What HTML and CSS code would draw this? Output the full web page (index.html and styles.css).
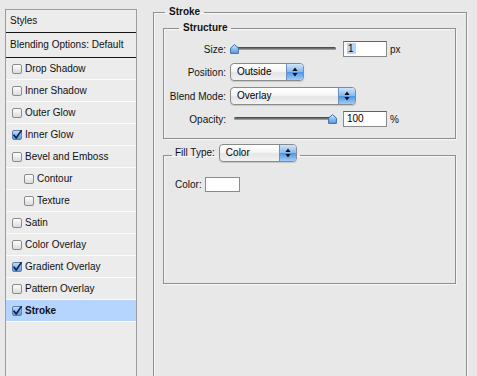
FILE: index.html
```html
<!DOCTYPE html>
<html>
<head>
<meta charset="utf-8">
<link rel="stylesheet" href="styles.css">
</head>
<body>
<div class="window">
  <aside class="styles-list">
    <div class="list-head">Styles</div>
    <div class="list-blend">Blending Options: Default</div>
    <ul class="effects">
      <li class="effect"><svg class="cb" viewBox="0 0 10 10"><use href="#box"/></svg>Drop Shadow</li>
      <li class="effect"><svg class="cb" viewBox="0 0 10 10"><use href="#box"/></svg>Inner Shadow</li>
      <li class="effect"><svg class="cb" viewBox="0 0 10 10"><use href="#box"/></svg>Outer Glow</li>
      <li class="effect"><svg class="cb" viewBox="0 0 10 10"><use href="#boxon"/></svg>Inner Glow</li>
      <li class="effect"><svg class="cb" viewBox="0 0 10 10"><use href="#box"/></svg>Bevel and Emboss</li>
      <li class="effect sub"><svg class="cb" viewBox="0 0 10 10"><use href="#box"/></svg>Contour</li>
      <li class="effect sub"><svg class="cb" viewBox="0 0 10 10"><use href="#box"/></svg>Texture</li>
      <li class="effect"><svg class="cb" viewBox="0 0 10 10"><use href="#box"/></svg>Satin</li>
      <li class="effect"><svg class="cb" viewBox="0 0 10 10"><use href="#box"/></svg>Color Overlay</li>
      <li class="effect"><svg class="cb" viewBox="0 0 10 10"><use href="#boxon"/></svg>Gradient Overlay</li>
      <li class="effect"><svg class="cb" viewBox="0 0 10 10"><use href="#box"/></svg>Pattern Overlay</li>
      <li class="effect selected"><svg class="cb" viewBox="0 0 10 10"><use href="#boxon"/></svg>Stroke</li>
    </ul>
  </aside>

  <main class="panel">
    <fieldset class="group outer">
      <legend class="legend-outer">Stroke</legend>

      <fieldset class="group structure">
        <legend class="legend-structure">Structure</legend>
        <div class="form">
          <span class="label">Size:</span>
          <div class="control">
            <div class="slider"><span class="track"></span><svg class="thumb thumb-left" viewBox="0 0 9 10"><use href="#thumb"/></svg></div>
            <span class="field"><span class="sel">1</span></span>
            <span class="unit">px</span>
          </div>

          <span class="label">Position:</span>
          <div class="control">
            <div class="popup popup-position"><span class="popup-text">Outside</span><span class="popup-arrows"><svg viewBox="0 0 6 10" class="arr"><use href="#arrows"/></svg></span></div>
          </div>

          <span class="label">Blend Mode:</span>
          <div class="control">
            <div class="popup popup-blend"><span class="popup-text">Overlay</span><span class="popup-arrows"><svg viewBox="0 0 6 10" class="arr"><use href="#arrows"/></svg></span></div>
          </div>

          <span class="label">Opacity:</span>
          <div class="control">
            <div class="slider"><span class="track"></span><svg class="thumb thumb-right" viewBox="0 0 9 10"><use href="#thumb"/></svg></div>
            <span class="field">100</span>
            <span class="unit">%</span>
          </div>
        </div>
      </fieldset>

      <fieldset class="group fill">
        <legend class="legend-fill">
          <span class="fill-label">Fill Type:</span>
          <div class="popup popup-fill"><span class="popup-text">Color</span><span class="popup-arrows"><svg viewBox="0 0 6 10" class="arr"><use href="#arrows"/></svg></span></div>
        </legend>
        <div class="color-row">
          <span>Color:</span>
          <span class="swatch"></span>
        </div>
      </fieldset>
    </fieldset>
  </main>
</div>

<svg class="defs" width="0" height="0">
  <defs>
    <linearGradient id="gbox" x1="0" y1="0" x2="0" y2="1">
      <stop offset="0" stop-color="#ffffff"/>
      <stop offset="1" stop-color="#d9d9d9"/>
    </linearGradient>
    <linearGradient id="gboxon" x1="0" y1="0" x2="0" y2="1">
      <stop offset="0" stop-color="#cfe3fa"/>
      <stop offset="0.5" stop-color="#8ab8ec"/>
      <stop offset="1" stop-color="#5d98dd"/>
    </linearGradient>
    <linearGradient id="gthumb" x1="0" y1="0" x2="0" y2="1">
      <stop offset="0" stop-color="#d8ebfc"/>
      <stop offset="0.5" stop-color="#8dbdee"/>
      <stop offset="1" stop-color="#5b9be0"/>
    </linearGradient>
    <symbol id="box" viewBox="0 0 10 10">
      <rect x="0.5" y="0.5" width="9" height="9" rx="1.5" fill="url(#gbox)" stroke="#8a8a8a"/>
    </symbol>
    <symbol id="boxon" viewBox="0 0 10 10">
      <rect x="0.5" y="0.5" width="9" height="9" rx="1.5" fill="url(#gboxon)" stroke="#5a7fb0"/>
      <path d="M2 5.2 L4.2 8 L9.6 0.2" fill="none" stroke="#13244a" stroke-width="1.7" stroke-linecap="round" stroke-linejoin="round"/>
    </symbol>
    <symbol id="thumb" viewBox="0 0 9 10">
      <path d="M4.5 0.6 L8.4 4 L8.4 9.4 L0.6 9.4 L0.6 4 Z" fill="url(#gthumb)" stroke="#3d6fa8" stroke-linejoin="round"/>
    </symbol>
    <symbol id="arrows" viewBox="0 0 6 10">
      <path d="M3 0.5 L5.6 4 L0.4 4 Z M3 9.5 L5.6 6 L0.4 6 Z" fill="#111"/>
    </symbol>
  </defs>
</svg>
</body>
</html>
```

FILE: styles.css
```css
html, body {
  margin: 0;
  height: 376px;
  overflow: hidden;
}

body {
  background: #e8e8e8;
  font-family: "Liberation Sans", Arial, sans-serif;
  font-size: 10px;
  color: #111;
}

.defs {
  position: absolute;
  width: 0;
  height: 0;
}

.window {
  display: flex;
  align-items: flex-start;
  height: 371px;
  overflow: hidden;
  padding: 5px 0 0 5px;
}

/* ---------- left list ---------- */
.styles-list {
  flex: none;
  box-sizing: border-box;
  width: 132px;
  height: 380px;
  margin-top: 4px;
  border: 1px solid #9c9c9c;
  background: #ececec;
}

.list-head {
  height: 22px;
  line-height: 22px;
  padding-left: 4px;
  border-bottom: 1px solid #151515;
}

.list-blend {
  height: 24px;
  line-height: 24px;
  padding-left: 4px;
  border-bottom: 1px solid #151515;
}

.effects {
  list-style: none;
  margin: 0;
  padding: 0;
}

.effect {
  display: flex;
  align-items: center;
  gap: 3px;
  height: 21px;
  padding-left: 6px;
  border-bottom: 1px solid #fbfbfb;
}

.effect.sub {
  padding-left: 18px;
}

.effect.selected {
  background: #b5d5ff;
  font-weight: bold;
}

.cb {
  width: 10px;
  height: 10px;
  flex: none;
  overflow: visible;
}

/* ---------- right panel ---------- */
.panel {
  margin-left: 16px;
}

.group {
  margin: 0;
  border: 1px solid #8e8e8e;
  box-shadow: 1px 1px 0 #f6f6f6, inset 1px 1px 0 #f6f6f6;
}

.outer {
  box-sizing: border-box;
  width: 314px;
  height: 380px;
  padding: 0 10px 0 9px;
}

.outer > legend,
.structure > legend {
  font-weight: bold;
  line-height: 14px;
  padding: 0 4px;
}

.legend-outer {
  margin-left: 2px;
}

.structure {
  margin-top: 2px;
  padding: 6px 0 11px 0;
}

.legend-structure {
  margin-left: 15px;
}

.form {
  display: grid;
  grid-template-columns: 62px auto;
  column-gap: 4px;
  row-gap: 6px;
  align-items: center;
}

.label {
  text-align: right;
}

.control {
  display: flex;
  align-items: center;
}

.slider {
  position: relative;
  width: 108px;
  height: 16px;
  margin-right: 5px;
}

.track {
  position: absolute;
  left: 4px;
  right: 2px;
  top: 6px;
  height: 3px;
  border-radius: 2px;
  background: linear-gradient(#3e3e3e, #7a7a7a 60%, #b0b0b0);
}

.thumb {
  position: absolute;
  top: 3px;
  width: 9px;
  height: 10px;
}

.thumb-left {
  left: 0;
}

.thumb-right {
  right: 1px;
}

.field {
  box-sizing: border-box;
  width: 44px;
  height: 16px;
  line-height: 14px;
  padding-left: 3px;
  border: 1px solid #8a8a8a;
  border-top-color: #626262;
  background: #fff;
  color: #000;
}

.sel {
  background: #b5d5ff;
  padding: 0 2px 0 1px;
}

.unit {
  margin-left: 3px;
}

.popup {
  display: flex;
  box-sizing: border-box;
  height: 18px;
  border: 1px solid #8a8a8a;
  border-radius: 4px;
  overflow: hidden;
  background: linear-gradient(#ffffff, #f6f6f6 45%, #e4e4e4 55%, #f2f2f2);
  box-shadow: 0 1px 1px rgba(0, 0, 0, 0.15);
}

.popup-position {
  width: 74px;
}

.popup-blend {
  width: 126px;
}

.popup-fill {
  width: 78px;
}

.popup-text {
  flex: 1;
  padding-left: 6px;
  line-height: 16px;
  color: #000;
}

.popup-arrows {
  display: flex;
  align-items: center;
  justify-content: center;
  width: 16px;
  border-left: 1px solid #6d8fbf;
  background: linear-gradient(#cfe5fb, #86b9ef 48%, #4f95e2 52%, #9fcdf8);
}

.arr {
  width: 6px;
  height: 10px;
}

.fill {
  margin-top: 5px;
  padding: 11px 0 91px 0;
}

.legend-fill {
  display: flex;
  align-items: flex-start;
  gap: 4px;
  margin-left: 8px;
  padding: 0 3px 4px 3px;
}

.fill-label {
  line-height: 18px;
}

.color-row {
  display: flex;
  align-items: center;
  gap: 3px;
  padding-left: 11px;
}

.swatch {
  box-sizing: border-box;
  width: 35px;
  height: 15px;
  border: 1px solid #8a8a8a;
  background: #fff;
}
```
